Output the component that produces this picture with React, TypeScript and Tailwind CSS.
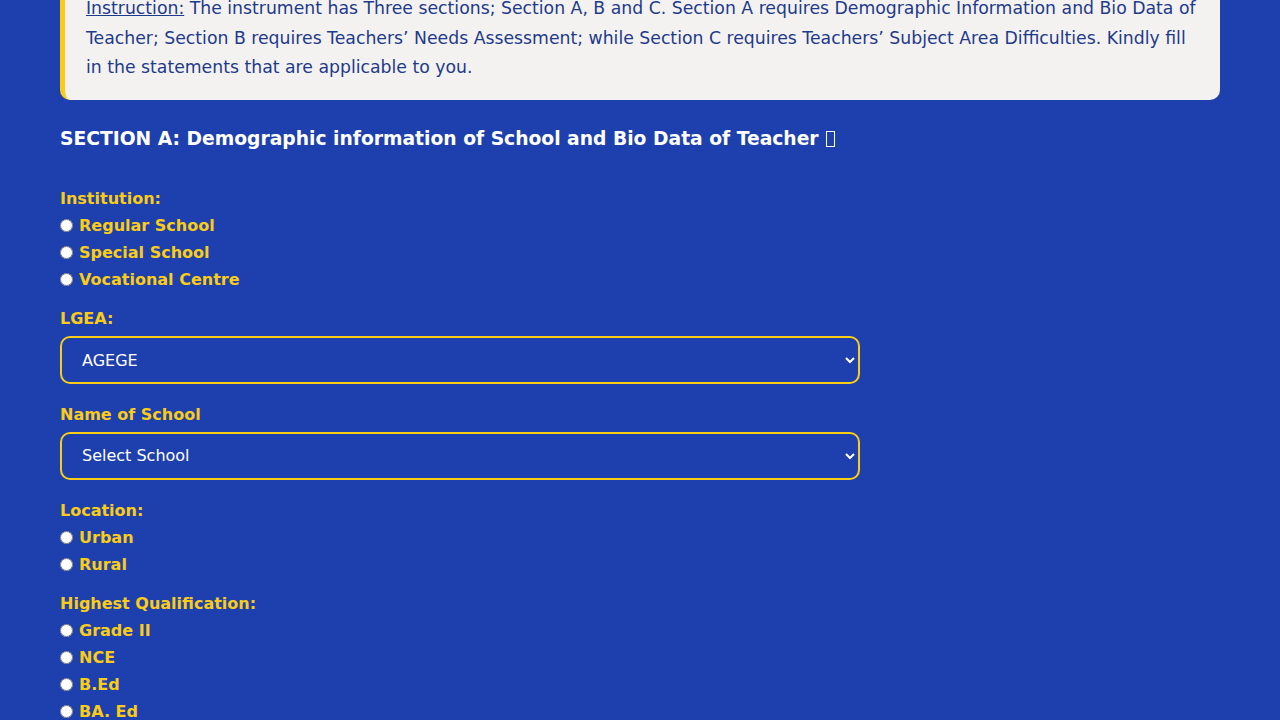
import React from "react";

const institutions = ["Regular School", "Special School", "Vocational Centre"];
const locations = ["Urban", "Rural"];
const qualifications = ["Grade II", "NCE", "B.Ed", "BA. Ed", "B.Sc. Ed"];

function Radio({ name, label }: { name: string; label: string }) {
  return (
    <label className="flex h-[27px] items-center gap-1.5 text-[16px] font-bold text-[#facc15]">
      <input type="radio" name={name} className="h-[13px] w-[13px]" />
      <span>{label}</span>
    </label>
  );
}

function FieldLabel({ children }: { children: React.ReactNode }) {
  return (
    <div className="h-[27px] text-[16px] font-bold leading-[27px] text-[#facc15]">
      {children}
    </div>
  );
}

function Select({ value, options }: { value: string; options: string[] }) {
  return (
    <select
      defaultValue={value}
      className="h-12 w-[800px] rounded-[10px] border-2 border-[#facc15] bg-[#1e40af] pl-4 pr-2 text-[16px] text-white"
    >
      {options.map((o) => (
        <option key={o}>{o}</option>
      ))}
    </select>
  );
}

export default function App() {
  return (
    <div className="min-h-screen overflow-hidden bg-[#1e40af] px-[60px] font-['DejaVu_Sans',sans-serif]">
      <div className="-mt-[26px]">
        {/* Instruction box */}
        <div className="rounded-[10px] border-l-[5px] border-[#facc15] bg-[#f4f2f0] pb-[17px] pl-[21px] pr-5 pt-5 text-[17.28px] leading-[29.5px] text-[#1e3a8a]">
          <p>
            <span className="underline">Instruction:</span> The instrument has
            Three sections; Section A, B and C. Section A requires Demographic
            Information and Bio Data of Teacher; Section B requires Teachers’
            Needs Assessment; while Section C requires Teachers’ Subject Area
            Difficulties. Kindly fill in the statements that are applicable to
            you.
          </p>
        </div>

        {/* Section A */}
        <h3 className="mt-[25px] flex items-center text-[18.72px] font-bold leading-7 text-white">
          SECTION A: Demographic information of School and Bio Data of Teacher
          <span className="ml-[7px] inline-block h-[16px] w-[9px] border border-white" />
        </h3>

        <div className="mt-[32.5px]">
          <FieldLabel>Institution:</FieldLabel>
          {institutions.map((i) => (
            <Radio key={i} name="institution" label={i} />
          ))}
        </div>

        <div className="mt-3">
          <FieldLabel>LGEA:</FieldLabel>
          <div className="mt-1">
            <Select value="AGEGE" options={["AGEGE", "ALIMOSHO", "IKEJA"]} />
          </div>
        </div>

        <div className="mt-[17px]">
          <FieldLabel>Name of School</FieldLabel>
          <div className="mt-[3.5px]">
            <Select value="Select School" options={["Select School"]} />
          </div>
        </div>

        <div className="mt-[17.5px]">
          <FieldLabel>Location:</FieldLabel>
          {locations.map((l) => (
            <Radio key={l} name="location" label={l} />
          ))}
        </div>

        <div className="mt-3">
          <FieldLabel>Highest Qualification:</FieldLabel>
          {qualifications.map((q) => (
            <Radio key={q} name="qualification" label={q} />
          ))}
        </div>
      </div>
    </div>
  );
}
